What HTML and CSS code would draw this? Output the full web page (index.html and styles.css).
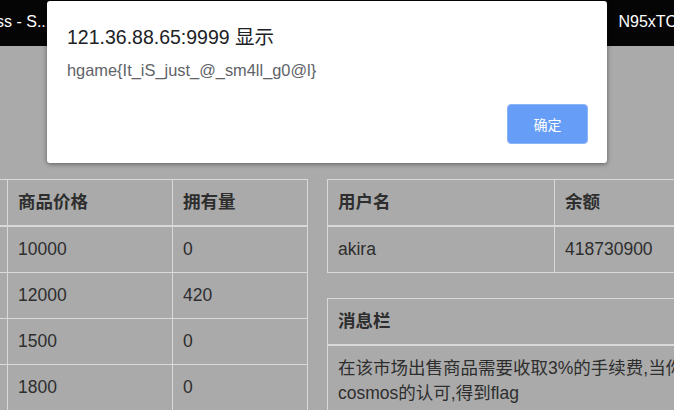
FILE: index.html
```html
<!DOCTYPE html>
<html lang="zh-CN">
<head>
  <meta charset="UTF-8" />
  <meta name="viewport" content="width=device-width, initial-scale=1" />
  <title>Market</title>
  <link rel="stylesheet" href="styles.css">
</head>
<body>

<!-- 顶部导航 -->
<nav class="topbar">
  <span class="brand">ss - S...</span>
  <span class="user">N95xTC_</span>
</nav>

<main class="content">

  <div class="left-col">
    <table class="grid goods">
      <colgroup>
        <col class="c-name">
        <col class="c-price">
        <col class="c-own">
      </colgroup>
      <thead>
        <tr>
          <th>商品名称</th>
          <th>商品价格</th>
          <th>拥有量</th>
        </tr>
      </thead>
      <tbody>
        <tr><td>cosmos</td><td>10000</td><td>0</td></tr>
        <tr><td>akira</td><td>12000</td><td>420</td></tr>
        <tr><td>mizuki</td><td>1500</td><td>0</td></tr>
        <tr><td>shiro</td><td>1800</td><td>0</td></tr>
      </tbody>
    </table>
  </div>

  <div class="right-col">
    <table class="grid users">
      <colgroup>
        <col class="c-user">
        <col>
      </colgroup>
      <thead>
        <tr>
          <th>用户名</th>
          <th>余额</th>
        </tr>
      </thead>
      <tbody>
        <tr><td>akira</td><td>418730900</td></tr>
      </tbody>
    </table>

    <table class="grid msg">
      <thead>
        <tr><th>消息栏</th></tr>
      </thead>
      <tbody>
        <tr><td>在该市场出售商品需要收取3%的手续费,当你的余额足够多时将获得<br>cosmos的认可,得到flag</td></tr>
      </tbody>
    </table>
  </div>

</main>

<!-- alert 弹窗 -->
<div class="dialog">
  <div class="dialog-title">121.36.88.65:9999 显示</div>
  <div class="dialog-msg">hgame{It_iS_just_@_sm4ll_g0@l}</div>
  <div class="dialog-actions">
    <button class="btn-ok">确定</button>
  </div>
</div>

</body>
</html>
```

FILE: styles.css
```css
body {
  margin: 0;
  background: #aaaaaa;
  color: #2e2e2e;
  font-family: "Liberation Sans", "Noto Sans CJK SC", sans-serif;
  overflow: hidden;
  width: 674px;
  height: 410px;
}
.topbar {
  height: 46px;
  background: #050505;
  color: #fff;
  display: flex;
  justify-content: space-between;
  align-items: center;
  font-size: 16px;
  padding-bottom: 2px;
  box-sizing: border-box;
}
.topbar .brand {
  margin-left: -4px;
}
.topbar .user {
  margin-right: -12px;
  font-size: 16px;
}
.content {
  display: flex;
  gap: 20px;
  margin-top: 133px;
}
.left-col {
  flex: none;
  width: 457px;
  margin-left: -150px;
}
.right-col {
  flex: none;
  width: 560px;
}
.grid {
  width: 100%;
  border-collapse: collapse;
  table-layout: fixed;
  font-size: 17.5px;
  margin-bottom: 25px;
}
.grid th, .grid td {
  border: 1px solid #d9d9d9;
  padding: 10px;
  line-height: 25px;
  text-align: left;
  white-space: nowrap;
}
.grid th {
  font-weight: bold;
  border-bottom-width: 2px;
}
.goods .c-name { width: 157px; }
.goods .c-price { width: 165px; }
.goods .c-own { width: 135px; }
.users .c-user { width: 227px; }
.dialog {
  position: absolute;
  left: 47px;
  top: 1px;
  width: 560px;
  height: 162px;
  box-sizing: border-box;
  background: #fff;
  border-radius: 3px;
  box-shadow: 0 1px 5px rgba(0,0,0,0.45);
  padding: 24px 19px 19px 20px;
  display: flex;
  flex-direction: column;
}
.dialog-title {
  font-family: "Liberation Sans", "Noto Sans CJK SC", sans-serif;
  font-size: 19.5px;
  line-height: 24px;
  color: #202124;
}
.dialog-msg {
  margin-top: 11px;
  font-size: 16.4px;
  line-height: 20px;
  color: #5f6368;
}
.dialog-actions {
  margin-top: auto;
  display: flex;
  justify-content: flex-end;
}
.btn-ok {
  width: 81px;
  height: 40px;
  background: #669df6;
  border: 1px solid #8cb5f8;
  border-radius: 4px;
  color: #fff;
  font-family: "Noto Sans CJK SC", sans-serif;
  font-size: 14px;
}
```
